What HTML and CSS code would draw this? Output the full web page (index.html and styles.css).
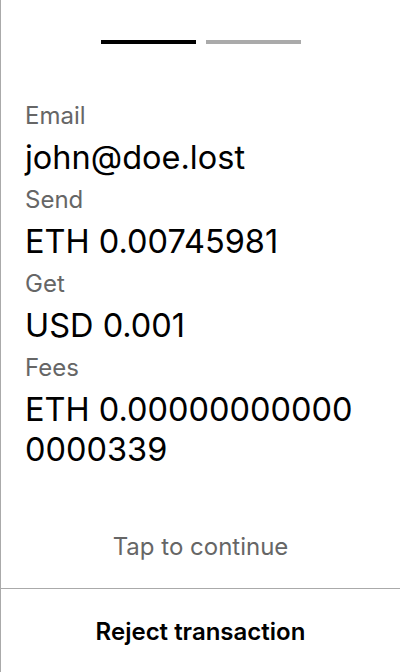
FILE: index.html
```html
<!DOCTYPE html>
<html lang="en">
<head>
<meta charset="utf-8">
<title>Confirm transaction</title>
<link rel="stylesheet" href="styles.css">
</head>
<body>
<main class="screen">
  <div class="steps">
    <span class="step step-active"></span>
    <span class="step"></span>
  </div>
  <section class="details">
    <div class="label">Email</div>
    <div class="value">john@doe.lost</div>
    <div class="label">Send</div>
    <div class="value">ETH 0.00745981</div>
    <div class="label">Get</div>
    <div class="value">USD 0.001</div>
    <div class="label">Fees</div>
    <div class="value">ETH 0.000000000000000339</div>
  </section>
  <div class="tap">Tap to continue</div>
  <footer class="footer">
    <button class="reject">Reject transaction</button>
  </footer>
</main>
</body>
</html>
```
FILE: styles.css
```css
* { box-sizing: border-box; }
html, body { margin: 0; padding: 0; background: #fff; }
body { font-family: Inter, "Noto Sans", sans-serif; color: #000; }
.screen {
  width: 400px;
  height: 672px;
  border-left: 1px solid #aaaaaa;
  display: flex;
  flex-direction: column;
}
.steps {
  display: flex;
  justify-content: center;
  gap: 10px;
  padding-top: 40px;
}
.step {
  width: 95px;
  height: 4px;
  background: #aaaaaa;
}
.step-active { background: #000; }
.details {
  padding: 58px 36px 0 24px;
  display: flex;
  flex-direction: column;
  gap: 8px;
}
.label {
  font-size: 24px;
  line-height: 28px;
  color: #666666;
}
.value {
  font-size: 32.5px;
  line-height: 40px;
  color: #000;
  word-break: break-all;
}
.tap {
  margin-top: auto;
  text-align: center;
  font-size: 24px;
  line-height: 28px;
  color: #666666;
  padding-bottom: 27px;
}
.footer {
  border-top: 1px solid #aaaaaa;
  height: 84px;
  display: flex;
}
.reject {
  flex: 1;
  border: 0;
  background: transparent;
  font-family: inherit;
  font-size: 24px;
  font-weight: 600;
  color: #000;
  padding: 2px 0 0 0;
}
```
